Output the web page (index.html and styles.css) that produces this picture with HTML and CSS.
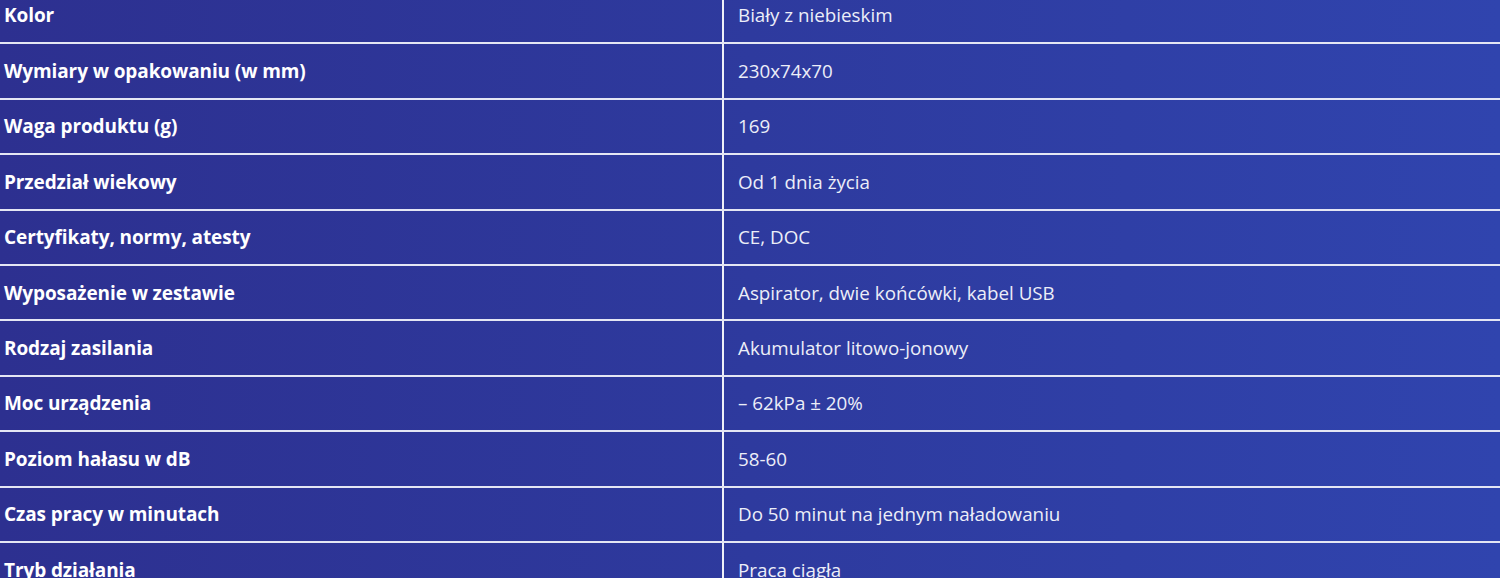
FILE: index.html
```html
<!DOCTYPE html>
<html lang="pl">
<head>
<meta charset="utf-8">
<title>Specyfikacja</title>
<link rel="stylesheet" href="styles.css">
</head>
<body>
<div class="page">
<table class="spec">
<tbody>
<tr><th>Kolor</th><td>Biały z niebieskim</td></tr>
<tr><th>Wymiary w opakowaniu (w mm)</th><td>230x74x70</td></tr>
<tr><th>Waga produktu (g)</th><td>169</td></tr>
<tr><th>Przedział wiekowy</th><td>Od 1 dnia życia</td></tr>
<tr><th>Certyfikaty, normy, atesty</th><td>CE, DOC</td></tr>
<tr><th>Wyposażenie w zestawie</th><td>Aspirator, dwie końcówki, kabel USB</td></tr>
<tr><th>Rodzaj zasilania</th><td>Akumulator litowo-jonowy</td></tr>
<tr><th>Moc urządzenia</th><td>– 62kPa ± 20%</td></tr>
<tr><th>Poziom hałasu w dB</th><td>58-60</td></tr>
<tr><th>Czas pracy w minutach</th><td>Do 50 minut na jednym naładowaniu</td></tr>
<tr><th>Tryb działania</th><td>Praca ciągła</td></tr>
</tbody>
</table>
</div>
</body>
</html>
```
FILE: styles.css
```css
html, body {
  margin: 0;
  padding: 0;
}
body {
  width: 1500px;
  height: 578px;
  overflow: hidden;
  background: linear-gradient(90deg, #2d3090 0%, #2e3a9e 50%, #3044ae 100%);
  font-family: "Open Sans", "Liberation Sans", sans-serif;
  color: #fff;
}
.page {
  margin-top: -12px;
}
.spec {
  width: 1500px;
  border-collapse: collapse;
  table-layout: fixed;
}
.spec tr {
  height: 55.4px;
}
.spec th,
.spec td {
  border-bottom: 2px solid #e4e6f4;
  vertical-align: middle;
  line-height: 24px;
  padding: 0;
}
.spec th {
  width: 723px;
  text-align: left;
  font-size: 19px;
  font-weight: 700;
  padding-left: 4px;
  box-sizing: border-box;
  border-right: 2px solid #eef0f8;
  color: #ffffff;
  letter-spacing: -0.1px;
}
.spec td {
  font-size: 18.8px;
  font-weight: 400;
  padding-left: 14px;
  color: #eceef8;
}
```
